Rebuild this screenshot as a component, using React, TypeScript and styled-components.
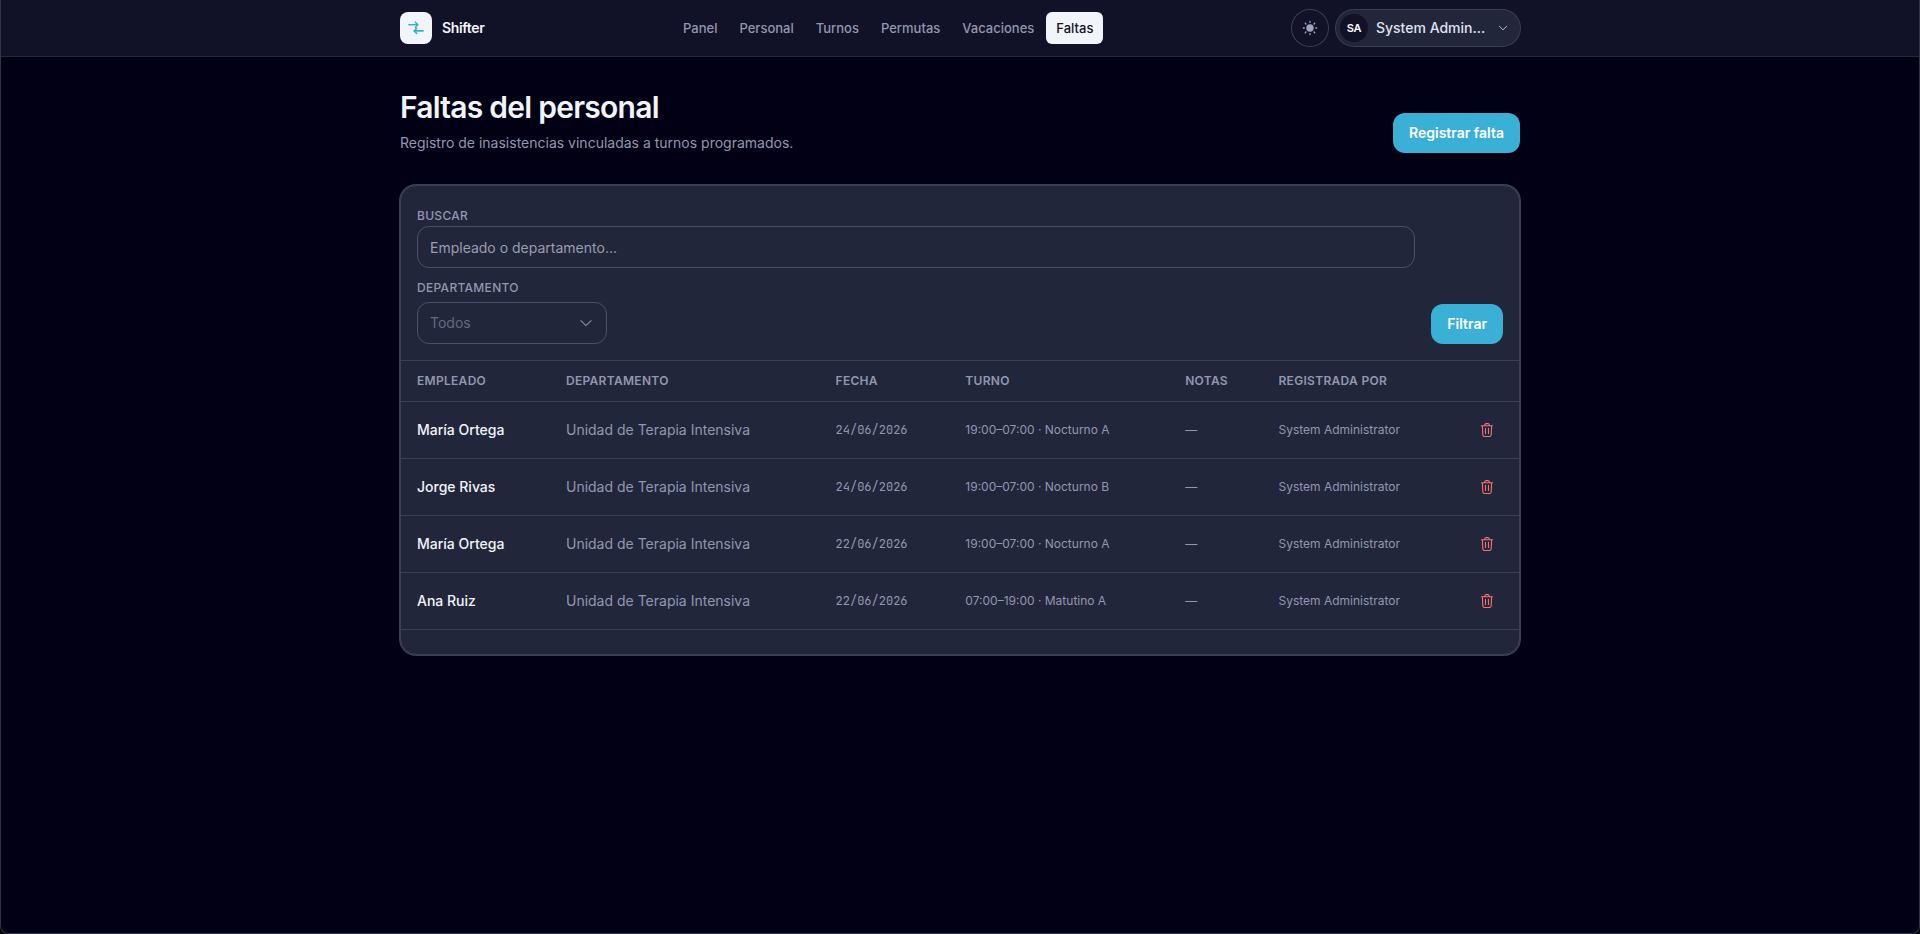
import React from "react";
import styled, { createGlobalStyle, css } from "styled-components";

const color = {
  page: "#020014",
  header: "#111127",
  headerLine: "#24283b",
  card: "#22263b",
  line: "#3a3f57",
  field: "#4b5069",
  text: "#f1f5f9",
  muted: "#9297b1",
  accent: "#3bb0d6",
  danger: "#f87171",
};

const GlobalStyle = createGlobalStyle`
  *, *::before, *::after { box-sizing: border-box; }
  html { background: #000; }
  body {
    margin: 0;
    font-family: Inter, "Liberation Sans", sans-serif;
    font-size: 14px;
    line-height: 20px;
    color: ${color.text};
  }
  button, input, select { font: inherit; color: inherit; }
`;

const Page = styled.div`
  min-height: 100vh;
  background: ${color.page};
  border: 1px solid #30334a;
  border-top: 0;
  border-radius: 0 0 8px 8px;
  overflow: hidden;
`;

const Header = styled.header`
  background: ${color.header};
  border-bottom: 1px solid ${color.headerLine};
`;

const container = css`
  width: 100%;
  max-width: 1152px;
  margin: 0 auto;
  padding: 0 16px;
`;

const HeaderInner = styled.div`
  ${container}
  height: 56px;
  display: flex;
  align-items: center;
  justify-content: space-between;
`;

const Brand = styled.a`
  display: flex;
  align-items: center;
  gap: 10px;
  font-weight: 600;
  letter-spacing: -0.025em;
  color: inherit;
  text-decoration: none;
`;

const BrandMark = styled.span`
  width: 32px;
  height: 32px;
  display: grid;
  place-items: center;
  border-radius: 8px;
  background: ${color.text};
  color: ${color.accent};
`;

const Nav = styled.nav`
  display: flex;
  gap: 2px;
`;

const NavLink = styled.a<{ $active?: boolean }>`
  padding: 6px 10px;
  border-radius: 6px;
  font-size: 13px;
  font-weight: 500;
  text-decoration: none;
  color: ${(p) => (p.$active ? color.header : color.muted)};
  background: ${(p) => (p.$active ? color.text : "transparent")};
`;

const Tools = styled.div`
  display: flex;
  gap: 8px;
`;

const RoundButton = styled.button`
  width: 36px;
  height: 36px;
  padding: 0;
  display: grid;
  place-items: center;
  border: 0;
  border-radius: 18px;
  background: transparent;
  box-shadow: 0 0 0 1px ${color.line};
  color: #a0a5c0;
`;

const UserButton = styled.button`
  width: 184px;
  height: 36px;
  padding: 0 12px 0 4px;
  display: flex;
  align-items: center;
  gap: 8px;
  border: 0;
  border-radius: 18px;
  background: ${color.card};
  box-shadow: 0 0 0 1px ${color.line};
  color: #dfe3ee;
  font-weight: 500;
`;

const Avatar = styled.span`
  width: 28px;
  height: 28px;
  display: grid;
  place-items: center;
  border-radius: 14px;
  background: ${color.header};
  color: #fff;
  font-size: 11px;
  font-weight: 600;
  letter-spacing: -0.025em;
`;

const UserName = styled.span`
  flex: 1;
  min-width: 0;
  overflow: hidden;
  text-overflow: ellipsis;
  white-space: nowrap;
  text-align: left;
`;

const Main = styled.main`
  ${container}
  padding-top: 32px;
  padding-bottom: 32px;
`;

const TitleRow = styled.div`
  display: flex;
  align-items: flex-end;
  justify-content: space-between;
  margin-bottom: 32px;
`;

const Title = styled.h1`
  margin: 0 0 8px;
  font-size: 30px;
  line-height: 36px;
  font-weight: 600;
  letter-spacing: -0.025em;
`;

const Subtitle = styled.p`
  margin: 0;
  color: ${color.muted};
`;

const PrimaryButton = styled.button`
  height: 40px;
  padding: 0 16px;
  border: 0;
  border-radius: 12px;
  background: ${color.accent};
  color: #fff;
  font-weight: 600;
`;

const Card = styled.section`
  border: 1px solid ${color.line};
  border-radius: 16px;
  box-shadow: 0 0 0 1px ${color.line};
  background: ${color.card};
  padding-bottom: 24px;
`;

const Filters = styled.form`
  display: flex;
  align-items: flex-end;
  gap: 16px;
  padding: 22px 16px 16px;
  border-bottom: 1px solid ${color.line};
`;

const Fields = styled.div`
  flex: 1;
  display: flex;
  flex-direction: column;
  gap: 12px;
`;

const Field = styled.div<{ $gap: number }>`
  display: flex;
  flex-direction: column;
  align-items: flex-start;
  gap: ${(p) => p.$gap}px;
`;

const Label = styled.label`
  font-size: 12px;
  line-height: 16px;
  font-weight: 500;
  letter-spacing: 0.025em;
  text-transform: uppercase;
  color: ${color.muted};
`;

const control = css`
  height: 42px;
  padding: 0 12px;
  border: 1px solid ${color.field};
  border-radius: 12px;
  background: transparent;
`;

const TextInput = styled.input`
  ${control}
  width: 100%;
  &::placeholder { color: #9b9dac; opacity: 1; }
`;

const SelectWrap = styled.div`
  width: 190px;
  display: grid;
  align-items: center;
  color: #878ba4;
  > * { grid-area: 1 / 1; }
  > svg { justify-self: end; margin-right: 14px; pointer-events: none; }
`;

const Select = styled.select`
  ${control}
  width: 100%;
  appearance: none;
  color: #656a82;
`;

const Table = styled.table`
  width: 100%;
  border-collapse: separate;
  border-spacing: 0;
`;

const Th = styled.th`
  height: 41px;
  padding: 0 16px;
  border-bottom: 1px solid ${color.line};
  text-align: left;
  font-size: 12px;
  line-height: 16px;
  font-weight: 600;
  letter-spacing: 0.025em;
  text-transform: uppercase;
  color: ${color.muted};
`;

const Td = styled.td<{ $kind?: "name" | "small" | "mono" | "action" }>`
  height: 57px;
  padding: 0 16px;
  border-bottom: 1px solid ${color.line};
  white-space: nowrap;
  color: ${color.muted};
  ${(p) => p.$kind === "name" && css`color: ${color.text}; font-weight: 500;`}
  ${(p) => p.$kind === "small" && css`font-size: 12px;`}
  ${(p) => p.$kind === "mono" && css`font-size: 12px; font-family: "JetBrains Mono", "Liberation Mono", monospace;`}
  ${(p) => p.$kind === "action" && css`padding-left: 4px; text-align: right;`}
`;

const DeleteButton = styled.button`
  width: 32px;
  height: 32px;
  padding: 0;
  display: inline-grid;
  place-items: center;
  vertical-align: middle;
  border: 0;
  border-radius: 8px;
  background: transparent;
  color: ${color.danger};
`;

const SwapIcon = () => (
  <svg width="16" height="16" viewBox="0 0 16 16" fill="none" stroke="currentColor" strokeWidth="1.6" strokeLinecap="round" strokeLinejoin="round" aria-hidden="true">
    <path d="M.9 4.7H9.8M7.4 2.2 9.9 4.7 7.4 7.2M15.1 10.9H6.2M8.6 8.4 6.1 10.9l2.5 2.5" />
  </svg>
);

const SunIcon = () => (
  <svg width="16" height="16" viewBox="0 0 16 16" fill="currentColor" stroke="currentColor" strokeWidth="1.4" strokeLinecap="round" aria-hidden="true">
    <circle cx="8" cy="8" r="3.7" stroke="none" />
    <path d="M8 1.4v.8M8 13.8v.8M1.4 8h.8M13.8 8h.8M3.3 3.3l.6.6M12.1 12.1l.6.6M3.3 12.7l.6-.6M12.1 3.9l.6-.6" />
  </svg>
);

const ChevronIcon = ({ size }: { size: number }) => (
  <svg width={size} height={size} viewBox="0 0 14 14" fill="none" stroke="currentColor" strokeWidth="1.1" strokeLinecap="round" strokeLinejoin="round" aria-hidden="true">
    <path d="M1.9 4.6 7 9.6l5.1-5" />
  </svg>
);

const TrashIcon = () => (
  <svg width="14" height="14" viewBox="0 0 14 14" fill="none" stroke="currentColor" strokeWidth="1.1" strokeLinecap="round" strokeLinejoin="round" aria-hidden="true">
    <path d="M1.4 2.8h11.2M4.5 2.7c.1-1.3.7-2.1 1.5-2.1h2c.8 0 1.4.8 1.5 2.1M2.4 2.9l.4 8.8c.1 1.1.8 1.8 1.8 1.8h4.8c1 0 1.7-.7 1.8-1.8l.4-8.8M5.5 5.4v5.2M8.5 5.4v5.2" />
  </svg>
);

const links = ["Panel", "Personal", "Turnos", "Permutas", "Vacaciones", "Faltas"];
const columns = ["Empleado", "Departamento", "Fecha", "Turno", "Notas", "Registrada por"];
const rows = [
  { name: "María Ortega", date: "24/06/2026", shift: "19:00–07:00 · Nocturno A" },
  { name: "Jorge Rivas", date: "24/06/2026", shift: "19:00–07:00 · Nocturno B" },
  { name: "María Ortega", date: "22/06/2026", shift: "19:00–07:00 · Nocturno A" },
  { name: "Ana Ruiz", date: "22/06/2026", shift: "07:00–19:00 · Matutino A" },
];

export default function App() {
  return (
    <Page>
      <GlobalStyle />
      <Header>
        <HeaderInner>
          <Brand href="#">
            <BrandMark><SwapIcon /></BrandMark>
            Shifter
          </Brand>
          <Nav>
            {links.map((l) => (
              <NavLink key={l} href="#" $active={l === "Faltas"}>{l}</NavLink>
            ))}
          </Nav>
          <Tools>
            <RoundButton type="button" aria-label="Cambiar tema"><SunIcon /></RoundButton>
            <UserButton type="button">
              <Avatar>SA</Avatar>
              <UserName>System Admin...</UserName>
              <ChevronIcon size={10} />
            </UserButton>
          </Tools>
        </HeaderInner>
      </Header>
      <Main>
        <TitleRow>
          <div>
            <Title>Faltas del personal</Title>
            <Subtitle>Registro de inasistencias vinculadas a turnos programados.</Subtitle>
          </div>
          <PrimaryButton type="button">Registrar falta</PrimaryButton>
        </TitleRow>
        <Card>
          <Filters onSubmit={(e) => e.preventDefault()}>
            <Fields>
              <Field $gap={2}>
                <Label htmlFor="search">Buscar</Label>
                <TextInput id="search" placeholder="Empleado o departamento..." />
              </Field>
              <Field $gap={6}>
                <Label htmlFor="department">Departamento</Label>
                <SelectWrap>
                  <Select id="department">
                    <option>Todos</option>
                  </Select>
                  <ChevronIcon size={14} />
                </SelectWrap>
              </Field>
            </Fields>
            <PrimaryButton type="submit">Filtrar</PrimaryButton>
          </Filters>
          <Table>
            <thead>
              <tr>
                {columns.map((c) => <Th key={c} scope="col">{c}</Th>)}
                <Th aria-label="Acciones" />
              </tr>
            </thead>
            <tbody>
              {rows.map((r, i) => (
                <tr key={i}>
                  <Td $kind="name">{r.name}</Td>
                  <Td>Unidad de Terapia Intensiva</Td>
                  <Td $kind="mono">{r.date}</Td>
                  <Td $kind="small">{r.shift}</Td>
                  <Td $kind="small">—</Td>
                  <Td $kind="small">System Administrator</Td>
                  <Td $kind="action">
                    <DeleteButton type="button" aria-label="Eliminar"><TrashIcon /></DeleteButton>
                  </Td>
                </tr>
              ))}
            </tbody>
          </Table>
        </Card>
      </Main>
    </Page>
  );
}
